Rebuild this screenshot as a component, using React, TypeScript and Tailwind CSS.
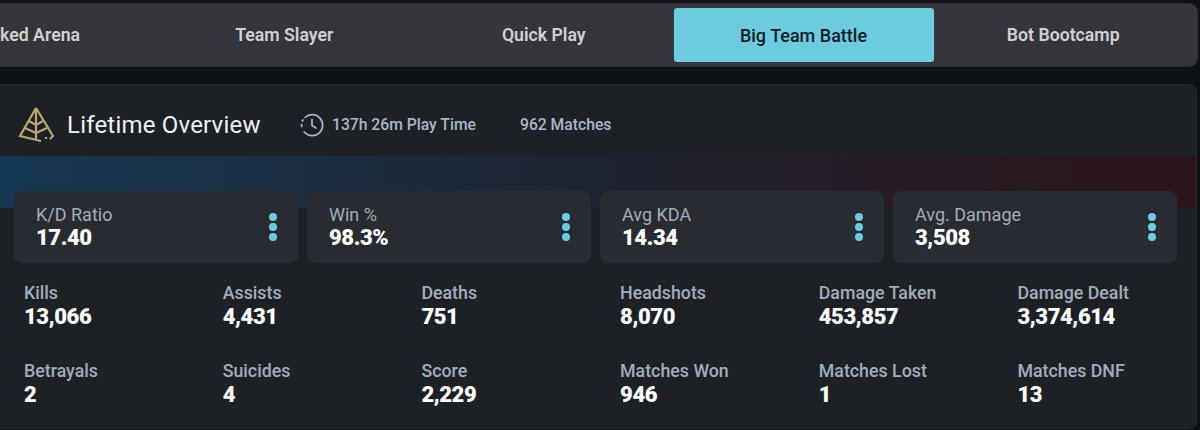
import React from "react";

const tabs = ["Ranked Arena", "Team Slayer", "Quick Play", "Big Team Battle", "Bot Bootcamp"];

const cards = [
  { label: "K/D Ratio", value: "17.40" },
  { label: "Win %", value: "98.3%" },
  { label: "Avg KDA", value: "14.34" },
  { label: "Avg. Damage", value: "3,508" },
];

const stats = [
  { label: "Kills", value: "13,066" },
  { label: "Assists", value: "4,431" },
  { label: "Deaths", value: "751" },
  { label: "Headshots", value: "8,070" },
  { label: "Damage Taken", value: "453,857" },
  { label: "Damage Dealt", value: "3,374,614" },
  { label: "Betrayals", value: "2" },
  { label: "Suicides", value: "4" },
  { label: "Score", value: "2,229" },
  { label: "Matches Won", value: "946" },
  { label: "Matches Lost", value: "1" },
  { label: "Matches DNF", value: "13" },
];

function PyramidIcon() {
  return (
    <svg width="36" height="37" viewBox="0 0 36 37" fill="none" stroke="#b9a671" strokeWidth="2.2" className="shrink-0">
      <path d="M18 2 L2 30 L23 35" />
      <path d="M18 2 L35 30 L32 33" />
      <path d="M18 2 V34" />
      <path d="M11 15 L18 19 L25 15" />
      <path d="M7 22 L18 27 L29 22" />
      <path d="M27 32 h2" />
    </svg>
  );
}

function ClockIcon() {
  return (
    <svg width="24" height="24" viewBox="0 0 24 24" fill="none" stroke="#a9b7c6" strokeWidth="1.7" strokeLinecap="round" className="shrink-0">
      <path d="M5 4.5 A10.5 10.5 0 1 1 4.2 19" />
      <path d="M1.6 13.5 v-3" strokeDasharray="2 2" />
      <path d="M3 7 l-.6 1" />
      <path d="M12 6.5 V12.5 L16 15" />
    </svg>
  );
}

export default function App() {
  return (
    <div className="w-[1200px] h-[430px] overflow-hidden bg-[#0e1215] font-['Roboto',sans-serif] pt-[4px]">
      {/* tabs */}
      <div className="ml-[-105px] w-[1302px] h-[62px] bg-[#35363b] rounded-lg flex items-center shadow-[0_0_0_1px_#2b2d31]">
        {tabs.map((t) => (
          <div
            key={t}
            className={
              t === "Big Team Battle"
                ? "w-[260px] h-[54px] flex items-center justify-center bg-[#6dcbe0] rounded-[3px] text-[#0f1d27] text-[18px] font-medium"
                : "w-[259.5px] h-[54px] flex items-center justify-center text-[#d0d1d3] text-[17.7px] font-semibold"
            }
          >
            {t}
          </div>
        ))}
      </div>

      {/* overview panel */}
      <div className="mt-[18px] ml-[-11px] w-[1208px] h-[345px] bg-[#1d2126] rounded-lg border border-[#262a2f]">
        <div className="h-[71px] pt-[8px] pl-[28px] flex items-center">
          <PyramidIcon />
          <h2 className="ml-[13px] w-[193px] whitespace-nowrap text-[24px] leading-none text-[#eef1f4] font-normal tracking-[0.2px]">
            Lifetime Overview
          </h2>
          <div className="ml-[40px]">
            <ClockIcon />
          </div>
          <span className="ml-[8px] text-[15.7px] font-medium text-[#a9b7c6]">137h 26m Play Time</span>
          <span className="ml-[44px] text-[15.7px] font-medium text-[#a9b7c6]">962 Matches</span>
        </div>

        <div className="h-[52px] bg-gradient-to-r from-[#143752] via-[#1d2330] to-[#2c141a]" />

        <div className="relative mt-[-17px] pl-[24px] flex gap-[9px]">
          {cards.map((c) => (
            <div key={c.label} className="w-[284px] h-[72px] bg-[#282b31] rounded-lg pl-[22px] pr-[21px] flex items-center justify-between">
              <div className="flex flex-col pt-[1px]">
                <span className="text-[18px] leading-[20px] text-[#a0adbc]">{c.label}</span>
                <span className="text-[22px] leading-[26px] font-black tracking-[-0.4px] text-white">{c.value}</span>
              </div>
              <div className="flex flex-col gap-[2px]">
                <span className="w-[8px] h-[8px] rounded-full bg-[#6dcbe0]" />
                <span className="w-[8px] h-[8px] rounded-full bg-[#6dcbe0]" />
                <span className="w-[8px] h-[8px] rounded-full bg-[#6dcbe0]" />
              </div>
            </div>
          ))}
        </div>

        <div className="mt-[20px] pl-[34px] grid grid-cols-[repeat(6,198.7px)] gap-y-[30px]">
          {stats.map((s) => (
            <div key={s.label} className="flex flex-col">
              <span className="text-[17.8px] leading-[20px] font-medium text-[#a0adbc]">{s.label}</span>
              <span className="text-[22px] leading-[28px] font-black tracking-[-0.4px] text-white">{s.value}</span>
            </div>
          ))}
        </div>
      </div>
    </div>
  );
}
